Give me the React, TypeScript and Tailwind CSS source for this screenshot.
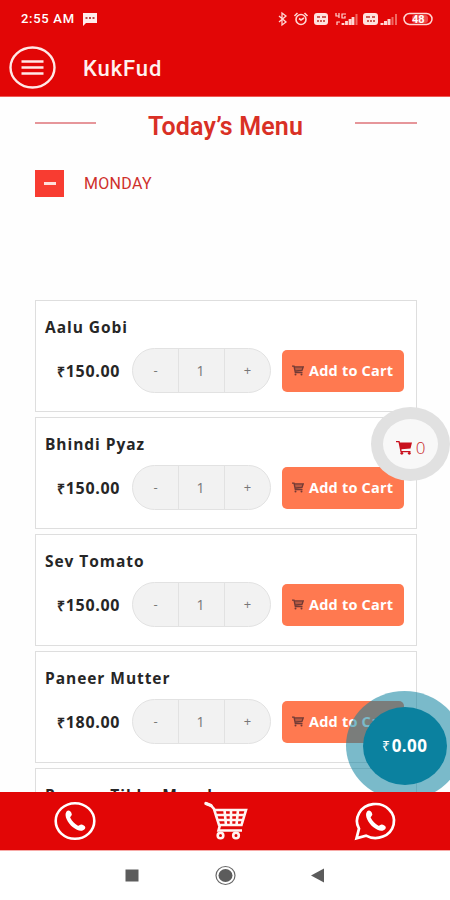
import type { ReactNode } from "react";

interface Dish {
  name: string;
  price: string;
}

const dishes: Dish[] = [
  { name: "Aalu Gobi", price: "150.00" },
  { name: "Bhindi Pyaz", price: "150.00" },
  { name: "Sev Tomato", price: "150.00" },
  { name: "Paneer Mutter", price: "180.00" },
  { name: "Paneer Tikka Masala", price: "180.00" },
];

const HANDSET =
  "M-8.5 -9.5C-6.5 -11.5 -4 -10 -3.2 -6.8C-2.9 -5.3 -5.4 -4.4 -4.6 -3C-3 0 -.4 2.8 2.6 4.5C4.2 5.3 5 3.2 6.4 3.5C9.5 4.3 11.3 6.2 9.8 8C7.2 11.2 2.4 9.9 -2.4 6.1C-7 2.3 -11.5 -5.5 -8.5 -9.5Z";

function StatusBar() {
  return (
    <div className="flex h-[38px] items-center pl-[21px] pr-[17px] text-white">
      <span className="w-[55px] whitespace-nowrap text-[13px] font-medium leading-5 tracking-[0.7px]">2:55 AM</span>
      <svg className="ml-[6px]" width="16" height="13" viewBox="0 0 16 13">
        <path d="M1 0H15V10H4L1 13Z" fill="#ffeceb" />
        <path d="M3.5 5h2M7 5h2M10.5 5h2" stroke="#a01010" strokeWidth="1.6" />
      </svg>
      <div className="ml-auto flex items-center">
        <svg width="156" height="16" viewBox="277 11 156 16" fill="none" stroke="#ffd6d2" strokeWidth="1.3">
          <path d="M279 16l7 6-4 3V13l4 3-7 6" />
          <circle cx="301" cy="19.5" r="5" strokeWidth="1.6" />
          <path d="M294.5 16l3-3M307.5 16l-3-3M299 18.5l2 1.5 3-2" strokeWidth="1.6" />
          <rect x="314" y="13" width="14" height="12" rx="3" fill="#ffe3df" stroke="none" />
          <rect x="363" y="13" width="15" height="12" rx="3" fill="#ffe3df" stroke="none" />
          <path d="M317 17h3M322 17h4M317 21h2M320 21h2M323 21h2M366 17h4M372 17h3M367 21h2M370 21h2M373 21h2" stroke="#cf5b55" strokeWidth="2" />
          <path d="M336 13v3h3M339 13v5M346 14h-4v4h3v-2M337 25v-3h3" strokeWidth="1.2" />
          <path d="M343 25v-2M346.5 25v-4M350 25v-6M353 25v-8" strokeWidth="2.8" />
          <path d="M356.5 25V14M396 25V14" stroke="#f06a63" strokeWidth="2" />
          <path d="M382 25v-2M385.5 25v-4M389 25v-6" strokeWidth="3" />
          <path d="M392.5 25v-8" stroke="#f06a63" strokeWidth="2" />
          <rect x="404" y="13.5" width="28" height="11" rx="5.5" strokeWidth="1.5" />
          <rect x="412" y="15" width="16" height="8" rx="3" fill="#ee4a4c" stroke="none" />
          <text x="412" y="23" fontFamily="Roboto" fontSize="11" fontWeight="700" fill="#fff" stroke="none">48</text>
        </svg>
      </div>
    </div>
  );
}

function Header() {
  return (
    <header className="h-[97px] shrink-0 border-b border-[#ef5a55] bg-[#e20606] font-[Roboto,sans-serif]">
      <StatusBar />
      <div className="flex h-[58px] items-center pl-[9px]">
        <svg width="47" height="43" viewBox="0 0 47 43" fill="none" stroke="#ffe9e7">
          <ellipse cx="23.5" cy="21.5" rx="22" ry="20" strokeWidth="2.4" />
          <path d="M12.5 15.5h22M12.5 21.5h22M12.5 27.5h22" strokeWidth="2.5" />
        </svg>
        <h1 className="ml-[27px] mt-[3px] text-[22px] font-medium leading-none tracking-[0.9px] text-[#fff1ef]">KukFud</h1>
      </div>
    </header>
  );
}

function CartGlyph() {
  return (
    <svg width="12" height="11" viewBox="0 0 12 11" fill="none" stroke="#713a35">
      <path d="M0 1.2h2L3.3 7.5h7.2M2.3 2h8.9L10 5.5 3 6Z" strokeWidth="1.3" />
      <path d="M3 4h7" strokeWidth="1" />
      <circle cx="3.5" cy="9.6" r="1" fill="#713a35" stroke="none" />
      <circle cx="9.5" cy="9.6" r="1" fill="#713a35" stroke="none" />
    </svg>
  );
}

function DishCard({ name, price }: Dish) {
  return (
    <article className="h-[112px] shrink-0 border border-[#dedede] bg-white">
      <h3 className="ml-[9px] mt-[14px] whitespace-nowrap text-[15.5px] font-bold leading-6 tracking-[0.95px] text-[#262626]">
        {name}
      </h3>
      <div className="mt-[9px] flex h-[45px] items-center">
        <p className="ml-[21px] w-[75px] whitespace-nowrap text-[16px] font-bold tracking-[0.7px] text-[#262626]">
          <span className="text-[14px]">₹</span>{price}
        </p>
        <div className="flex h-[45px] w-[139px] overflow-hidden rounded-full border border-[#e2e2e2] bg-[#f2f2f2] text-[13px] text-[#777]">
          <button className="flex-1">-</button>
          <span className="flex w-[47px] items-center justify-center border-x border-[#e2e2e2] pr-0.5 text-[14px]">1</span>
          <button className="flex-1">+</button>
        </div>
        <button className="ml-[11px] flex h-[42px] w-[122px] items-center rounded-[5px] bg-[#ff7950] pl-[10px] text-white">
          <CartGlyph />
          <span className="ml-[5px] whitespace-nowrap text-[14.5px] font-bold tracking-[0.2px]">Add to Cart</span>
        </button>
      </div>
    </article>
  );
}

function FooterButton({ label, children }: { label: string; children: ReactNode }) {
  return (
    <button aria-label={label} className="flex h-[58px] w-[150px] items-center justify-center">
      {children}
    </button>
  );
}

function Footer() {
  return (
    <footer className="relative z-20 flex h-[59px] shrink-0 border-b border-[#f7aaa7] bg-[#e20606]">
      <FooterButton label="Call">
        <svg width="44" height="42" viewBox="-22 -21 44 42">
          <ellipse rx="19.3" ry="17.8" fill="none" stroke="#fff" strokeWidth="2.6" />
          <path d={HANDSET} fill="#fff" />
        </svg>
      </FooterButton>
      <FooterButton label="Cart">
        <svg width="46" height="42" viewBox="0 0 46 42" fill="none" stroke="#fff5f3" strokeWidth="2.6">
          <path d="M4 3.500l5 2 3 3.500 5 16h22.500L44 10H13M18 25l-1.500 5.500H40M15 15h27M16 20h25M22.5 10l1.5 15M29 10v15M36 10l-1.5 15" />
          <path d="M4 3.500l5 2" strokeWidth="3.5" strokeLinecap="round" />
          <circle cx="18.5" cy="35.5" r="2.8" />
          <circle cx="34" cy="35.5" r="2.8" />
        </svg>
      </FooterButton>
      <FooterButton label="WhatsApp">
        <svg width="46" height="42" viewBox="-22 -21 46 42">
          <path d="M-15 7.7A18.5 17 0 1 1 -8 14.6L-17.5 17.3Z" fill="none" stroke="#fff" strokeWidth="2.7" />
          <path d={HANDSET} transform="translate(1.5 0)" fill="#fff" />
        </svg>
      </FooterButton>
    </footer>
  );
}

function AndroidNav() {
  return (
    <nav className="flex h-[49px] shrink-0 items-center justify-center bg-white">
      <svg width="202" height="24" viewBox="0 0 202 24" fill="#5c5c5c">
        <rect x="1.5" y="5.5" width="13" height="12" />
        <ellipse cx="101.5" cy="11.5" rx="7" ry="6.5" />
        <ellipse cx="101.5" cy="11.5" rx="9.5" ry="9" fill="none" stroke="#686868" strokeWidth="1.2" />
        <path d="M187 11.5l13-7v14Z" />
      </svg>
    </nav>
  );
}

export default function App() {
  return (
    <div className="relative flex h-[900px] w-[450px] flex-col overflow-hidden bg-white font-['Open_Sans',sans-serif]">
      <Header />
      <main className="flex min-h-0 flex-1 flex-col overflow-hidden bg-[#fefefe] pl-[35px] pr-[33px]">
        <div className="mt-[12px] flex h-9 items-center justify-between font-[Roboto,sans-serif]">
          <span className="-mt-[9px] h-[2px] w-[61px] bg-[#e6969a]" />
          <h2 className="whitespace-nowrap text-[25px] font-semibold tracking-[0.15px] text-[#d93025]">Today’s Menu</h2>
          <span className="-mt-[9px] h-[2px] w-[62px] bg-[#e6969a]" />
        </div>
        <div className="mt-[25px] flex h-[28px] items-center font-[Roboto,sans-serif]">
          <span className="flex h-[27px] w-[29px] items-center justify-center bg-[#f83c31]">
            <span className="h-[3px] w-[12px] bg-[#ffdeda]" />
          </span>
          <span className="ml-5 text-[16px] tracking-[0.3px] text-[#cf302c]">MONDAY</span>
        </div>
        <section className="mt-[103px] flex w-[382px] flex-col gap-[5px]">
          {dishes.map((dish) => (
            <DishCard key={dish.name} {...dish} />
          ))}
        </section>
      </main>
      <Footer />
      <AndroidNav />

      {/* floating cart count */}
      <div className="absolute left-[371px] top-[407px] z-10 flex h-[74px] w-[79px] items-center justify-center rounded-[50%] border-[12px] border-[#e1e1e1] bg-[#f8f8f8] pt-[6px] text-[#c91e2a]">
        <svg width="17" height="15" viewBox="0 0 17 15" fill="#c9101d">
          <path d="M0 1h3.5l.5 1.5h12L14.5 8.5 5.5 9.3V11H14.5v1.2H4.5L2.5 2.3H0Z" />
          <circle cx="5.8" cy="13.3" r="1.4" />
          <circle cx="13.3" cy="13.3" r="1.4" />
        </svg>
        <span className="ml-[3px] text-[17px] font-light leading-none">0</span>
      </div>

      {/* floating order total */}
      <div className="absolute left-[346px] top-[691px] z-10 flex h-[109px] w-[117px] items-center justify-center rounded-[50%] bg-[#0d819e]/55">
        <div className="flex h-[78px] w-[84px] items-center justify-center rounded-[50%] bg-[#0b819f] font-bold text-white">
          <span className="mr-[2px] text-[14px] font-normal">₹</span>
          <span className="text-[17px] tracking-[0.4px]">0.00</span>
        </div>
      </div>
    </div>
  );
}
